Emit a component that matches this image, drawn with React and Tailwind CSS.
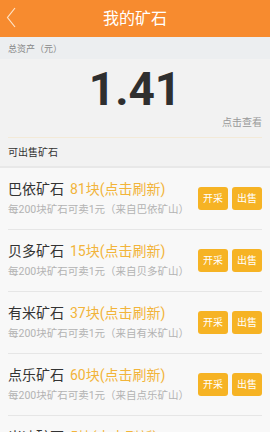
const ores = [
  { name: "巴依矿石", count: 81 },
  { name: "贝多矿石", count: 15 },
  { name: "有米矿石", count: 37 },
  { name: "点乐矿石", count: 60 },
  { name: "米迪矿石", count: 5 },
];

const font = { fontFamily: 'Roboto, "Noto Sans CJK SC", sans-serif' };

const OreRow = ({ ore }) => (
  <div className="mx-2 flex items-center h-[62px] border-b border-[#e6e6e6]">
    <div className="flex-1 min-w-0 whitespace-nowrap">
      <div className="flex items-baseline gap-[6px] leading-none">
        <span className="text-[14px] text-[#333]">{ore.name}</span>
        <span className="text-[14px] text-[#f2b43a]">{ore.count}块(点击刷新)</span>
      </div>
      <div className="mt-[9px] text-[10.5px] leading-none text-[#b3b3b3]">
        每200块矿石可卖1元（来自{ore.name.replace("矿石", "")}矿山）
      </div>
    </div>
    <div className="flex gap-[4px] shrink-0">
      <button className="w-[30px] h-[23px] rounded-[3px] bg-[#f6b324] text-white text-[10px]">开采</button>
      <button className="w-[30px] h-[23px] rounded-[3px] bg-[#f6b324] text-white text-[10px]">出售</button>
    </div>
  </div>
);

const App = () => {
  return (
    <div className="w-[270px] h-[432px] overflow-hidden bg-[#f4f4f4]" style={font}>
      <div className="relative h-[37px] bg-[#f78b2f] flex items-center justify-center">
        <svg className="absolute left-0 top-0" width="24" height="37" viewBox="0 0 24 37" fill="none">
          <polyline points="15,8 7.5,17.5 15,27" stroke="#fde3c8" strokeWidth="1.2" />
        </svg>
        <span className="text-white text-[16px]">我的矿石</span>
      </div>

      <div className="bg-[#f2f2f2]">
        <div className="h-[22px] bg-[#eceef0] px-2 pt-[8px] text-[9px] leading-none text-[#888]">总资产（元）</div>
        <div className="text-center text-[46px] font-bold leading-none text-[#2f2f2f] pt-[7px]">1.41</div>
        <div className="text-right px-[8px] mt-[6px] text-[10px] leading-none text-[#999]">点击查看</div>
        <div className="mx-2 mt-[9px] border-b border-[#f3ead8]"></div>
        <div className="px-2 h-[28px] flex items-center text-[10px] text-[#333]">可出售矿石</div>
      </div>
      <div className="h-[2px] bg-[#e8e8e8]"></div>

      <div className="bg-[#f8f8f8]">
        {ores.map((ore) => (
          <OreRow key={ore.name} ore={ore} />
        ))}
      </div>
    </div>
  );
};

export default App;
